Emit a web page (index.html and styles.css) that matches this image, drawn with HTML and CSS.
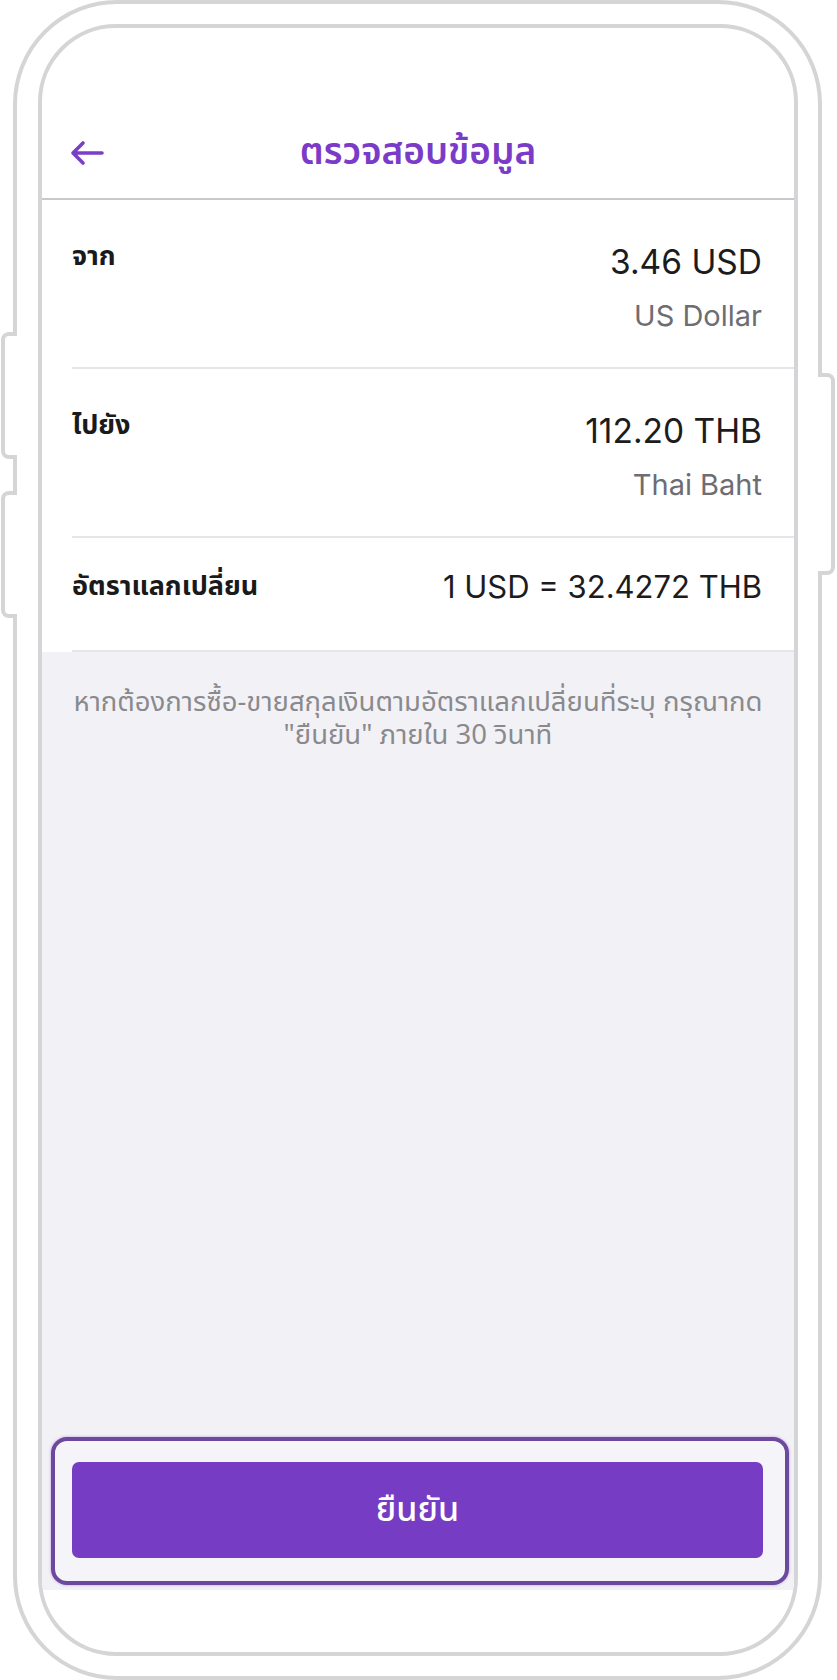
FILE: index.html
```html
<!DOCTYPE html>
<html lang="th">
<head>
<meta charset="UTF-8">
<meta name="viewport" content="width=device-width, initial-scale=1.0">
<title>ตรวจสอบข้อมูล</title>
<link rel="stylesheet" href="styles.css">
</head>
<body>
<div class="phone">
  <span class="side-btn side-left side-left-1"></span>
  <span class="side-btn side-left side-left-2"></span>
  <span class="side-btn side-right"></span>

  <div class="screen">
    <header class="nav">
      <button class="back" aria-label="back">
        <svg width="34" height="26" viewBox="0 0 34 26">
          <path d="M32 13H3M13 3L3 13L13 23" fill="none" stroke="#7a3fc8" stroke-width="3.6" stroke-linecap="round" stroke-linejoin="round"/>
        </svg>
      </button>
      <h1 class="title">ตรวจสอบข้อมูล</h1>
      <span></span>
    </header>

    <section class="summary">
      <div class="row">
        <div class="label">จาก</div>
        <div class="value">
          <div class="amount">3.46 USD</div>
          <div class="currency">US Dollar</div>
        </div>
      </div>
      <div class="row">
        <div class="label">ไปยัง</div>
        <div class="value">
          <div class="amount">112.20 THB</div>
          <div class="currency">Thai Baht</div>
        </div>
      </div>
      <div class="row row-rate">
        <div class="label">อัตราแลกเปลี่ยน</div>
        <div class="rate">1 USD = 32.4272 THB</div>
      </div>
    </section>

    <div class="content">
      <div class="note">
        <p class="note-line">หากต้องการซื้อ-ขายสกุลเงินตามอัตราแลกเปลี่ยนที่ระบุ กรุณากด</p>
        <p class="note-line">"ยืนยัน" ภายใน 30 วินาที</p>
      </div>
      <div class="confirm-wrap">
        <button class="confirm">ยืนยัน</button>
      </div>
    </div>
  </div>
</div>
</body>
</html>
```

FILE: styles.css
```css
body {
  margin: 0;
  background: #fff;
  font-family: "Noto Sans Thai", "Noto Sans", "Liberation Sans", sans-serif;
}

.phone {
  position: relative;
  box-sizing: border-box;
  width: 809px;
  height: 1680px;
  margin-left: 13px;
  padding: 20px 20px 20px 21px;
  border: 4px solid #d4d5d7;
  border-radius: 104px;
  background: #fff;
}

.side-btn {
  position: absolute;
  box-sizing: border-box;
  background: #fff;
  border: 4px solid #d4d5d7;
}
.side-left {
  left: -16px;
  width: 16px;
  border-right: none;
  border-radius: 8px 0 0 8px;
}
.side-left-1 {
  top: 328px;
  height: 127px;
}
.side-left-2 {
  top: 487px;
  height: 127px;
}
.side-right {
  right: -17px;
  top: 369px;
  width: 17px;
  height: 202px;
  border-left: none;
  border-radius: 0 8px 8px 0;
}

.screen {
  box-sizing: border-box;
  height: 100%;
  border: 4px solid #d4d5d7;
  border-radius: 78px;
  overflow: hidden;
  display: flex;
  flex-direction: column;
  background: #fff;
}

.nav {
  display: grid;
  grid-template-columns: 1fr auto 1fr;
  align-items: center;
  height: 90px;
  margin-top: 80px;
  padding: 0 28px;
  border-bottom: 2px solid #c9c9cd;
}
.back {
  justify-self: start;
  padding: 0;
  border: none;
  background: none;
  display: flex;
}
.title {
  margin: 0;
  font-size: 37px;
  font-weight: 600;
  color: #7a3cc8;
  line-height: 40px;
}

.row {
  display: flex;
  justify-content: space-between;
  align-items: flex-start;
  margin-left: 30px;
  padding: 42px 32px 33px 0;
  border-bottom: 2px solid #e5e5ea;
}
.label {
  font-size: 27px;
  font-weight: 700;
  line-height: 30px;
  color: #1a1a1a;
}
.value {
  text-align: right;
}
.amount {
  font-family: "Inter", "Liberation Sans", sans-serif;
  font-size: 33.5px;
  line-height: 40px;
  color: #1c1c1e;
}
.currency {
  margin-top: 16px;
  font-family: "Inter", "Liberation Sans", sans-serif;
  font-size: 29px;
  line-height: 36px;
  color: #6d6d72;
}
.row-rate {
  align-items: center;
  padding-top: 29px;
  padding-bottom: 43px;
}
.rate {
  font-family: "Inter", "Liberation Sans", sans-serif;
  font-size: 31px;
  line-height: 40px;
  color: #1c1c1e;
}

.content {
  flex: 1;
  display: flex;
  flex-direction: column;
  background: #f2f2f6;
  margin-bottom: 62px;
  padding-bottom: 5px;
}
.note {
  margin: 34px 16px 0;
  text-align: center;
  color: #8a8a8e;
}
.note-line {
  margin: 0;
  height: 33px;
  font-size: 27.5px;
  line-height: 33px;
}

.confirm-wrap {
  margin: auto 5px 0 9px;
  padding: 21px 22px 23px 17px;
  border: 4px solid #6b4a9e;
  border-radius: 16px;
  background: #f5f4f8;
  box-shadow: 0 0 3px rgba(160, 90, 220, 0.6);
}
.confirm {
  display: block;
  width: 100%;
  height: 96px;
  border: none;
  border-radius: 7px;
  background: #763dc4;
  color: #fff;
  font-family: "Noto Sans Thai", "Noto Sans", "Liberation Sans", sans-serif;
  font-size: 34px;
  font-weight: 500;
}
```
